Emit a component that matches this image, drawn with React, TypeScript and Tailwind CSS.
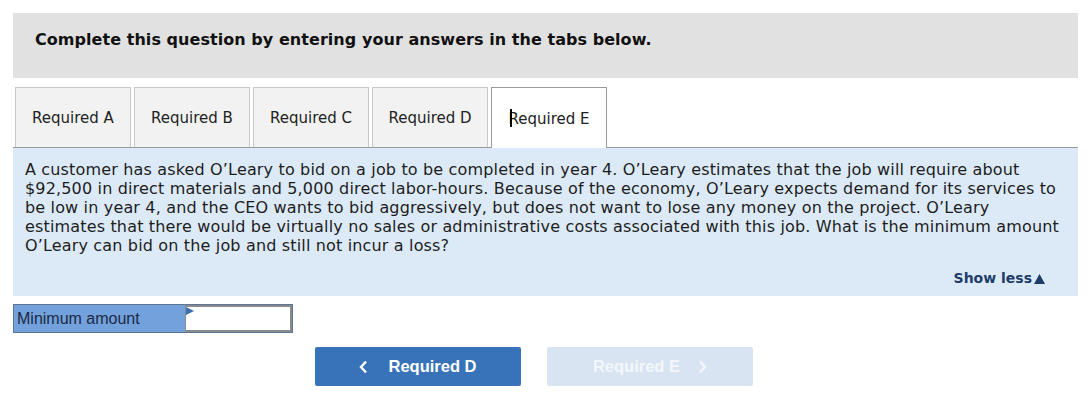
import React from 'react';

const tabs = ['Required A', 'Required B', 'Required C', 'Required D', 'Required E'];

export default function App() {
  return (
    <div className="min-h-[398px] w-[1092px] bg-white pl-[13px] pt-[13px] font-['DejaVu_Sans',Verdana,sans-serif] text-[#222]">
      <div className="h-[65px] w-[1065px] bg-[#e1e1e1] pl-[22px] pt-[17px]">
        <h2 className="text-[16px] font-bold leading-[20px] tracking-[0.05px] text-[#111]">
          Complete this question by entering your answers in the tabs below.
        </h2>
      </div>

      <div className="mt-[10px] flex h-[60px] w-[1065px] items-end gap-[3px] border-b border-[#9a9a9a] pl-[2px]">
        {tabs.map((t, i) => {
          const active = i === tabs.length - 1;
          return (
            <div
              key={t}
              className={
                active
                  ? 'relative -mb-px flex h-[61px] w-[116px] items-center justify-center border border-b-0 border-[#9a9a9a] bg-white pt-[2px] text-[15px] text-[#222]'
                  : 'flex h-[60px] w-[116px] items-center justify-center border border-b-0 border-[#c8c8c8] bg-[#f2f2f2] pt-[2px] text-[15px] text-[#222]'
              }
            >
              {active && <span className="absolute left-[18px] top-[21px] h-[18px] w-[2px] bg-black" />}
              {t}
            </div>
          );
        })}
      </div>

      <div className="w-[1065px] bg-[#dceaf8] pb-[7px] pl-[12px] pr-[12px] pt-[12px]">
        <p className="text-[16px] leading-[19px] tracking-[0.16px] text-[#1d1d1d]">
          A customer has asked O’Leary to bid on a job to be completed in year 4. O’Leary estimates that the job will require about
          $92,500 in direct materials and 5,000 direct labor-hours. Because of the economy, O’Leary expects demand for its services to
          be low in year 4, and the CEO wants to bid aggressively, but does not want to lose any money on the project. O’Leary
          estimates that there would be virtually no sales or administrative costs associated with this job. What is the minimum amount
          O’Leary can bid on the job and still not incur a loss?
        </p>
        <div className="mt-[13px] flex justify-end pr-[21px]">
          <span className="flex items-center text-[14px] font-bold text-[#1f3c68]">
            Show less
            <svg width="11" height="10" viewBox="0 0 11 10" className="ml-[2px]">
              <path d="M5.5 0 L11 10 L0 10 Z" fill="#1f3c68" />
            </svg>
          </span>
        </div>
      </div>

      <div className="mt-[8px] flex h-[29px] w-[280px] border border-[#5d7595]">
        <div className="flex w-[171px] items-center bg-[#72a1dc] pl-[3px] font-['Liberation_Sans',Arial,sans-serif] text-[16px] text-[#1b2a44]">
          Minimum amount
        </div>
        <div className="relative flex-1 border-2 border-l border-[#8a8a8a] bg-white">
          <svg width="8" height="8" viewBox="0 0 8 8" className="absolute left-0 top-0">
            <path d="M0 0 L8 4 L0 8 Z" fill="#3a6fb0" />
          </svg>
        </div>
      </div>

      <div className="mt-[14px] flex gap-[26px] pl-[302px] font-['Liberation_Sans',Arial,sans-serif]">
        <button className="flex h-[39px] w-[206px] items-center justify-center gap-[20px] rounded-[2px] bg-[#3873b9] text-[16.5px] font-bold text-white">
          <svg width="9" height="14" viewBox="0 0 9 14">
            <path d="M7 1.5 L2 7 L7 12.5" fill="none" stroke="white" strokeWidth="2.4" />
          </svg>
          Required D
        </button>
        <button className="flex h-[39px] w-[206px] items-center justify-center gap-[18px] rounded-[2px] bg-[#d8e4f1] text-[16.5px] font-bold text-[#f3f7fb]">
          Required E
          <svg width="9" height="14" viewBox="0 0 9 14">
            <path d="M2 1.5 L7 7 L2 12.5" fill="none" stroke="#f3f7fb" strokeWidth="2.4" />
          </svg>
        </button>
      </div>
    </div>
  );
}
